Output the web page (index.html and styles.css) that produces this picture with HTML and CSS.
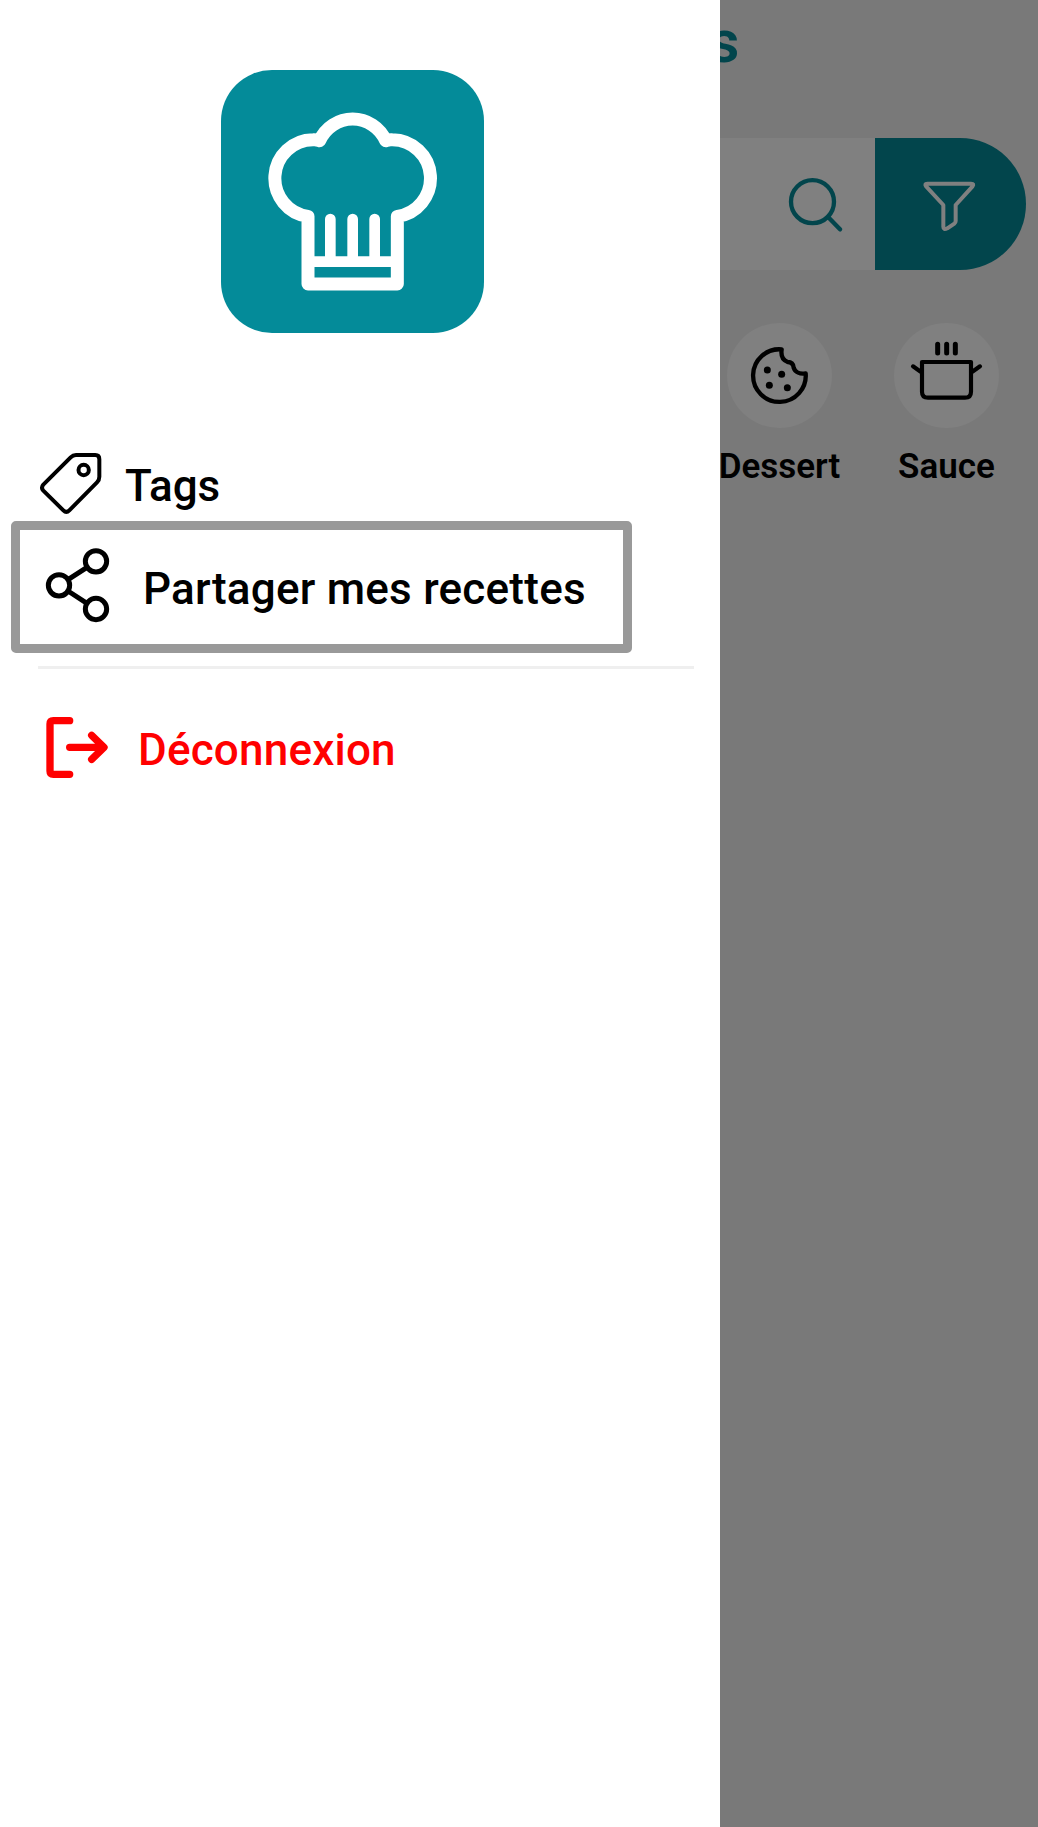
FILE: index.html
```html
<!DOCTYPE html>
<html lang="fr">
<head>
<meta charset="utf-8">
<title>Recettes</title>
<link rel="stylesheet" href="styles.css">
</head>
<body>
<div class="app">
  <nav class="drawer">
    <div class="brand">
      <svg class="brand-icon" viewBox="33 30 789 789" fill="none" stroke="#fff" stroke-linejoin="round" stroke-linecap="round">
        <path stroke-width="39" d="M294 469A115.300 115.300 0 0 1 309 239.500Q322 239 329 242A108 108 0 0 1 527 242Q534 239 547 239.500A115.300 115.300 0 0 1 562 469V672H294Z"/>
        <path stroke-width="32" d="M298 605H558M361 477V600M428 477V600M494 477V600"/>
      </svg>
    </div>
    <a class="item item-tags">
      <svg class="icon-tag" viewBox="114 60 195 195" fill="none" stroke="#000" stroke-width="12" stroke-linejoin="round">
        <path d="M228 75H286Q298 75 298 88V140Q298 150 291 157L208 241Q199 250 190 241L130 182Q122 173 130 164L212 82Q219 75 228 75Z"/>
        <circle cx="251" cy="120" r="15.500" stroke-width="12"/>
      </svg>
      <span>Tags</span>
    </a>
    <a class="item item-share">
      <svg class="icon-share" viewBox="135 350 195 228" fill="none" stroke="#000" stroke-width="15">
        <circle cx="288" cy="393" r="32"/>
        <circle cx="177" cy="465" r="32"/>
        <circle cx="288" cy="536" r="32"/>
        <path d="M204 448L261 411M204 482L261 519"/>
      </svg>
      <span>Partager mes recettes</span>
    </a>
    <hr class="rule">
    <a class="item item-logout">
      <svg class="icon-logout" viewBox="135 195 195 195" fill="none" stroke="#f00" stroke-width="22" stroke-linecap="round" stroke-linejoin="round">
        <path d="M209 212H160Q150 212 150 222V363Q150 373 160 373H209M209 292H310M275 256L312 292L275 328"/>
      </svg>
      <span>Déconnexion</span>
    </a>
  </nav>
  <main class="page">
    <h1 class="title">s</h1>
    <div class="search">
      <div class="field">
        <svg class="icon-search" viewBox="264 529 165 165" fill="none" stroke="#02454c" stroke-width="13" stroke-linecap="round">
          <circle cx="337.500" cy="603" r="64.500"/>
          <path d="M385 650L420 686"/>
        </svg>
      </div>
      <button class="filter" aria-label="Filtrer">
        <svg class="icon-filter" viewBox="666 540 165 156" fill="none" stroke="#808080" stroke-width="12" stroke-linejoin="round">
          <path d="M682 551H813Q824 551 817 560L767 615V663Q767 668 763 671L742 685Q730 691 730 680V615L679 560Q672 551 682 551Z"/>
        </svg>
      </button>
    </div>
    <div class="categories">
      <div class="category">
        <div class="disc">
          <svg class="icon-category" viewBox="81 69 315 315" fill="none" stroke="#000" stroke-width="13" stroke-linejoin="round" stroke-linecap="round">
            <path d="M245 148A79 79 0 1 0 317 220C300 223 286 217 281 203C280 191 273 186 263 186C249 181 242 168 245 148Z"/>
            <g fill="#000" stroke="none"><circle cx="202" cy="210" r="10.500"/><circle cx="245" cy="223" r="10.500"/><circle cx="208" cy="256" r="10.500"/><circle cx="262" cy="263" r="10.500"/></g>
          </svg>
        </div>
        <span>Dessert</span>
      </div>
      <div class="category">
        <div class="disc">
          <svg class="icon-category" viewBox="582 69 315 315" fill="none" stroke="#000" stroke-width="12.500" stroke-linejoin="round" stroke-linecap="round">
            <path d="M666 186H813V275Q813 293 795 293H684Q666 293 666 275ZM639 199L662 215M840 199L817 215"/>
            <path stroke-width="15" d="M713 133V159M740 133V159M766 133V159"/>
          </svg>
        </div>
        <span>Sauce</span>
      </div>
    </div>
  </main>
</div>
</body>
</html>
```
FILE: styles.css
```css
* { box-sizing: border-box; }
body { margin: 0; font-family: Roboto, "Liberation Sans", sans-serif; color: #000; }
svg { display: block; flex: none; }
.app { display: flex; width: 1038px; height: 1827px; overflow: hidden; }

.drawer { flex: none; width: 720px; padding-top: 70px; background: #fff; }
.brand { width: 263px; height: 263px; margin: 0 0 100px 221px; border-radius: 51px; background: #048b99; }
.brand-icon { width: 263px; height: 263px; }
.item { display: flex; align-items: center; font-size: 44px; font-weight: 500; line-height: 52px; white-space: nowrap; }
.item-tags { height: 88px; padding-left: 38px; gap: 22px; }
.item-tags span { padding-top: 17px; }
.icon-tag { width: 65px; height: 65px; margin-top: 11px; }
.item-share { width: 621px; height: 132px; margin-left: 11px; padding-left: 25px; gap: 33px; border: 9px solid #999; border-radius: 5px; letter-spacing: 0.24px; }
.item-share span { padding-top: 3px; }
.icon-share { width: 65px; height: 76px; margin-top: -4px; }
.rule { width: 656px; height: 3px; margin: 13px 0 0 38px; border: 0; background: #efefef; }
.item-logout { height: 158px; padding-left: 45px; gap: 28px; color: #f00; letter-spacing: 0.2px; }
.item-logout span { padding-top: 3px; }
.icon-logout { width: 65px; height: 65px; margin-top: -2px; }

.page { flex: none; display: flex; flex-direction: column; width: 318px; overflow: hidden; background: #797979; }
.title { height: 138px; margin: 0 0 0 -11px; padding-top: 9px; font-size: 59px; font-weight: 600; line-height: 66px; color: #02454c; }
.search { display: flex; height: 132px; }
.field { display: flex; align-items: center; justify-content: flex-end; width: 155px; padding-right: 32px; background: #808080; }
.icon-search { width: 55px; height: 55px; }
.filter { width: 151px; padding: 4px 0 0 47px; border: 0; border-radius: 0 66px 66px 0; background: #02454c; }
.icon-filter { width: 55px; height: 52px; }
.categories { display: flex; margin: 53px 0 0 -24px; }
.category { flex: none; display: flex; flex-direction: column; align-items: center; gap: 19px; width: 167px; font-size: 35px; font-weight: 600; line-height: 40px; }
.disc { width: 105px; height: 105px; border-radius: 50%; background: #808080; }
.icon-category { width: 105px; height: 105px; }
```
